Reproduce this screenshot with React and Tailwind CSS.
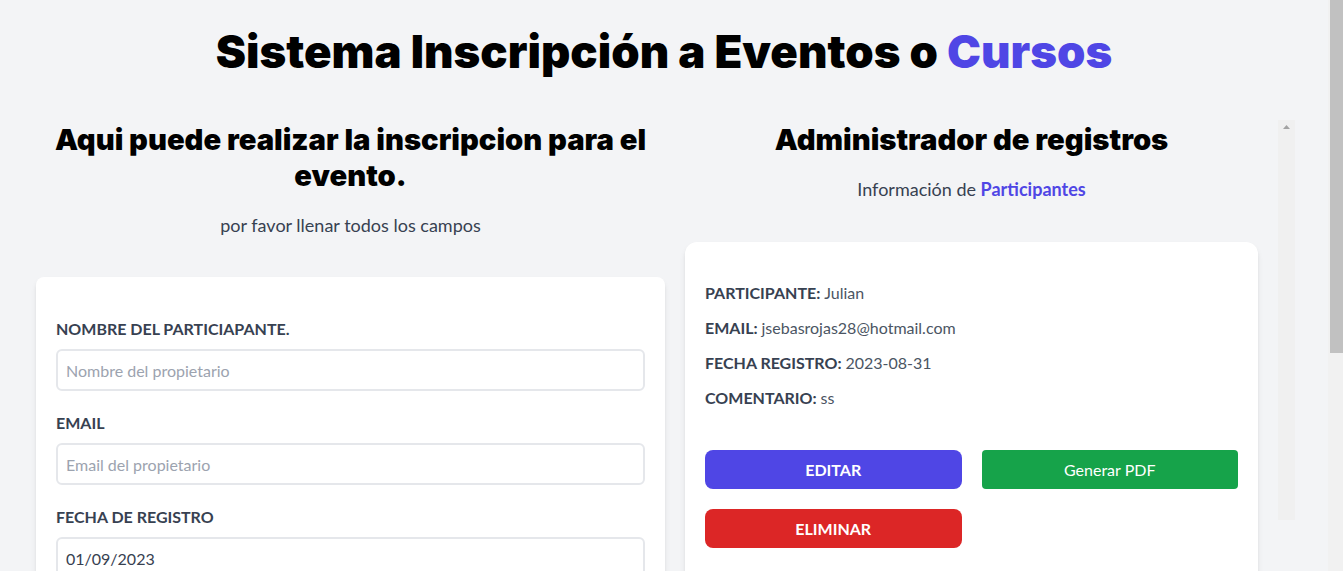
import React from 'react'

const registro = {
  nombre: 'Julian',
  email: 'jsebasrojas28@hotmail.com',
  fecha: '2023-08-31',
  comentario: 'ss',
}

const Formulario = () => {
  return (
    <div className="w-[649px] shrink-0 pl-5">
      <h2 className="font-['Inter',sans-serif] font-black text-[29.2px] leading-9 text-center">
        Aqui puede realizar la inscripcion para el evento.
      </h2>
      <p className="text-lg mt-[17px] text-center text-[#374151] mb-[38px]">
        por favor llenar todos los campos
      </p>

      <form className="bg-white shadow-md rounded-lg py-10 px-5 mb-10">
        <div className="mb-5">
          <label className="block text-[#374151] uppercase font-bold">
            Nombre del particiapante.
          </label>
          <input
            type="text"
            placeholder="Nombre del propietario"
            className="border-2 border-[#e5e7eb] w-full h-[42px] px-2 mt-2 placeholder-[#9ca3af] rounded-md"
          />
        </div>

        <div className="mb-5">
          <label className="block text-[#374151] uppercase font-bold">Email</label>
          <input
            type="email"
            placeholder="Email del propietario"
            className="border-2 border-[#e5e7eb] w-full h-[42px] px-2 mt-2 placeholder-[#9ca3af] rounded-md"
          />
        </div>

        <div className="mb-5">
          <label className="block text-[#374151] uppercase font-bold">Fecha de registro</label>
          <input
            type="text"
            defaultValue="01/09/2023"
            className="border-2 border-[#e5e7eb] w-full h-[42px] px-2 mt-2 text-[#374151] rounded-md"
          />
        </div>

        <div className="mb-5">
          <label className="block text-[#374151] uppercase font-bold">Comentario</label>
          <textarea
            placeholder="Describe tu comentario"
            className="border-2 border-[#e5e7eb] w-full p-2 mt-2 placeholder-[#9ca3af] rounded-md h-24"
          />
        </div>

        <input
          type="submit"
          value="Agregar participante"
          className="bg-[#4f46e5] w-full p-3 text-white uppercase font-bold rounded-md"
        />
      </form>
    </div>
  )
}

const Registros = () => {
  return (
    <div className="w-[630px] shrink-0 flex items-start">
      <div className="w-[613px] shrink-0">
        <h2 className="font-['Inter',sans-serif] font-black text-[29.2px] leading-9 text-center">
          Administrador de registros
        </h2>
        <p className="text-lg mt-[17px] mb-[39px] text-center text-[#374151]">
          Información de <span className="text-[#4f46e5] font-bold">Participantes</span>
        </p>

        <div className="mx-5 mb-10 bg-white shadow-md px-5 pt-[39px] pb-10 rounded-xl">
          <p className="font-bold mb-[11px] text-[#374151] uppercase">
            Participante: <span className="font-normal normal-case text-[#4b5563]">{registro.nombre}</span>
          </p>
          <p className="font-bold mb-[11px] text-[#374151] uppercase">
            Email: <span className="font-normal normal-case text-[#4b5563]">{registro.email}</span>
          </p>
          <p className="font-bold mb-[11px] text-[#374151] uppercase">
            Fecha registro: <span className="font-normal normal-case text-[#4b5563]">{registro.fecha}</span>
          </p>
          <p className="font-bold mb-[11px] text-[#374151] uppercase">
            Comentario: <span className="font-normal normal-case text-[#4b5563]">{registro.comentario}</span>
          </p>

          <div className="grid grid-cols-2 gap-5 mt-10">
            <button className="h-[39px] bg-[#4f46e5] text-white font-bold uppercase rounded-lg">
              Editar
            </button>
            <button className="h-[39px] bg-[#16a34a] text-white rounded-sm">
              Generar PDF
            </button>
            <button className="h-[39px] bg-[#dc2626] text-white font-bold uppercase rounded-lg">
              Eliminar
            </button>
          </div>
        </div>
      </div>

      {/* inner scrollbar track */}
      <div className="w-[17px] h-[400px] -mt-[2px] shrink-0 bg-[#f0f0f0] flex justify-center pt-[5px]">
        <svg width="7" height="4" viewBox="0 0 7 4">
          <path d="M3.5 0 L7 4 L0 4 Z" fill="#a3a3a3" />
        </svg>
      </div>
    </div>
  )
}

export default function App() {
  return (
    <div className="h-screen overflow-hidden flex bg-[#f3f4f6] font-['Lato',sans-serif] text-black">
      <div className="flex-1 min-w-0">
        <h1 className="pt-7 font-['Inter',sans-serif] font-black text-[45.5px] leading-[48px] text-center">
          Sistema Inscripción a Eventos o <span className="text-[#4f46e5]">Cursos</span>
        </h1>

        <div className="mt-[46px] flex pl-4">
          <Formulario />
          <Registros />
        </div>
      </div>

      {/* page scrollbar */}
      <div className="w-[15px] shrink-0 bg-[#f1f1f1] pl-[2px]">
        <div className="h-[353px] bg-[#c1c1c1]" />
      </div>
    </div>
  )
}
